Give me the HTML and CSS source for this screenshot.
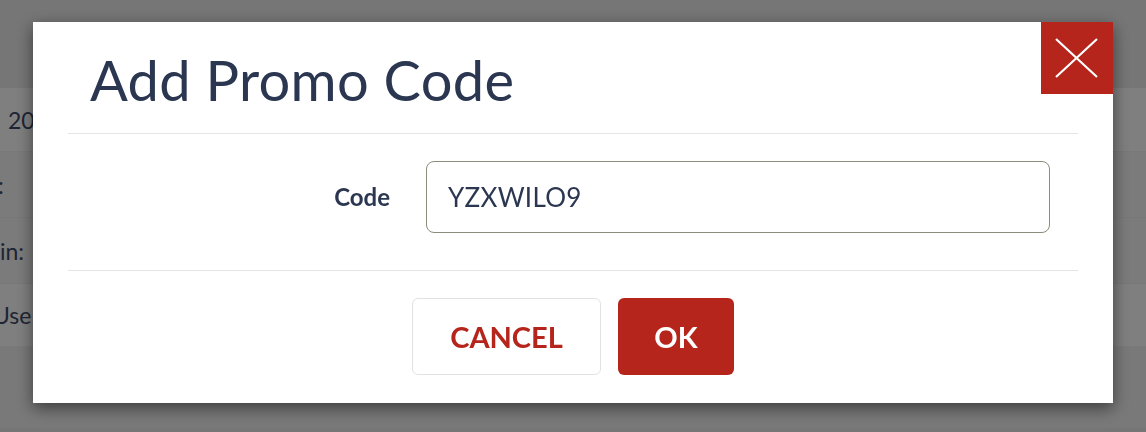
FILE: index.html
```html
<!DOCTYPE html>
<html lang="en">
<head>
<meta charset="utf-8">
<title>Add Promo Code</title>
<link rel="stylesheet" href="styles.css">
</head>
<body>
<div class="page">
  <div class="page-top"></div>
  <div class="row row-a"><span class="cell c1">2021</span></div>
  <div class="row row-b"><span class="cell c2">:</span></div>
  <div class="row row-b"><span class="cell c3">in:</span></div>
  <div class="row row-a"><span class="cell c4">Use</span></div>
  <div class="page-rest"></div>
</div>
<div class="backdrop"></div>
<div class="modal">
  <button class="close" type="button" aria-label="Close">
    <svg width="72" height="72" viewBox="0 0 72 72"><path d="M15 17 L56 55 M56 17 L15 55" stroke="#fff" stroke-width="2.2" fill="none"/></svg>
  </button>
  <div class="modal-header">
    <h1 class="title">Add Promo Code</h1>
  </div>
  <div class="modal-body">
    <label class="label" for="code">Code</label>
    <input class="input" id="code" type="text" value="YZXWILO9">
  </div>
  <div class="modal-footer">
    <button class="btn btn-cancel" type="button">CANCEL</button>
    <button class="btn btn-ok" type="button">OK</button>
  </div>
</div>
</body>
</html>
```
FILE: styles.css
```css
* { box-sizing: border-box; }
html, body { margin: 0; padding: 0; }
body {
  width: 1146px;
  height: 432px;
  overflow: hidden;
  font-family: Lato, "Noto Sans", sans-serif;
  background: #ececec;
  color: #2c3652;
}
.page { display: flex; flex-direction: column; }
.page-top { height: 88px; background: #ececec; }
.row {
  display: flex;
  align-items: center;
  font-size: 23px;
  color: #3e4a6a;
  overflow: hidden;
  white-space: nowrap;
}
.row-a { background: #ffffff; height: 63px; }
.row-b { background: #f6f6f6; height: 66px; }
.row + .row { border-top: 1px solid #f0f0f0; }
.c1 { margin-left: 8px; }
.c2 { margin-left: -2px; }
.c3 { margin-left: 0; }
.c4 { margin-left: -7px; }
.page-rest { height: 82px; background: #f2f2f2; }
.backdrop {
  position: fixed;
  inset: 0;
  background: rgba(0, 0, 0, 0.5);
}
.modal {
  position: fixed;
  top: 22px;
  left: 33px;
  width: 1080px;
  height: 381px;
  background: #fff;
  padding: 0 35px;
  box-shadow: 0 5px 15px rgba(0, 0, 0, 0.5);
  display: flex;
  flex-direction: column;
}
.close {
  position: absolute;
  top: 0;
  right: 0;
  width: 72px;
  height: 72px;
  border: 0;
  padding: 0;
  margin: 0;
  background: #b5251b;
  display: block;
}
.close svg { display: block; }
.modal-header {
  height: 112px;
  flex: none;
  border-bottom: 1px solid #e5e5e5;
  padding-left: 22px;
}
.title {
  margin: 0;
  padding-top: 25px;
  font-weight: 400;
  font-size: 56px;
  line-height: 66px;
  color: #2b3650;
  letter-spacing: 0.3px;
}
.modal-body {
  height: 137px;
  flex: none;
  border-bottom: 1px solid #e5e5e5;
  display: flex;
  align-items: flex-start;
  padding-top: 27px;
}
.label {
  width: 358px;
  text-align: right;
  padding-right: 36px;
  font-weight: 700;
  font-size: 24px;
  line-height: 72px;
  color: #2b3650;
}
.input {
  width: 624px;
  height: 72px;
  border: 1px solid #8c8c7c;
  border-radius: 8px;
  padding: 0 21px;
  font-family: Lato, "Noto Sans", sans-serif;
  font-size: 26px;
  color: #2b3650;
  outline: none;
  letter-spacing: 0.3px;
}
.modal-footer {
  flex: 1;
  display: flex;
  justify-content: center;
  align-items: flex-start;
  gap: 17px;
  padding-top: 27px;
}
.btn {
  height: 77px;
  border-radius: 6px;
  font-family: Lato, "Noto Sans", sans-serif;
  font-weight: 700;
  font-size: 29px;
  padding: 0;
  letter-spacing: 0;
}
.btn-cancel {
  width: 189px;
  background: #fff;
  border: 1px solid #e2e2e2;
  color: #b5251b;
}
.btn-ok {
  width: 116px;
  background: #b5251b;
  border: 0;
  color: #fff;
}
```
